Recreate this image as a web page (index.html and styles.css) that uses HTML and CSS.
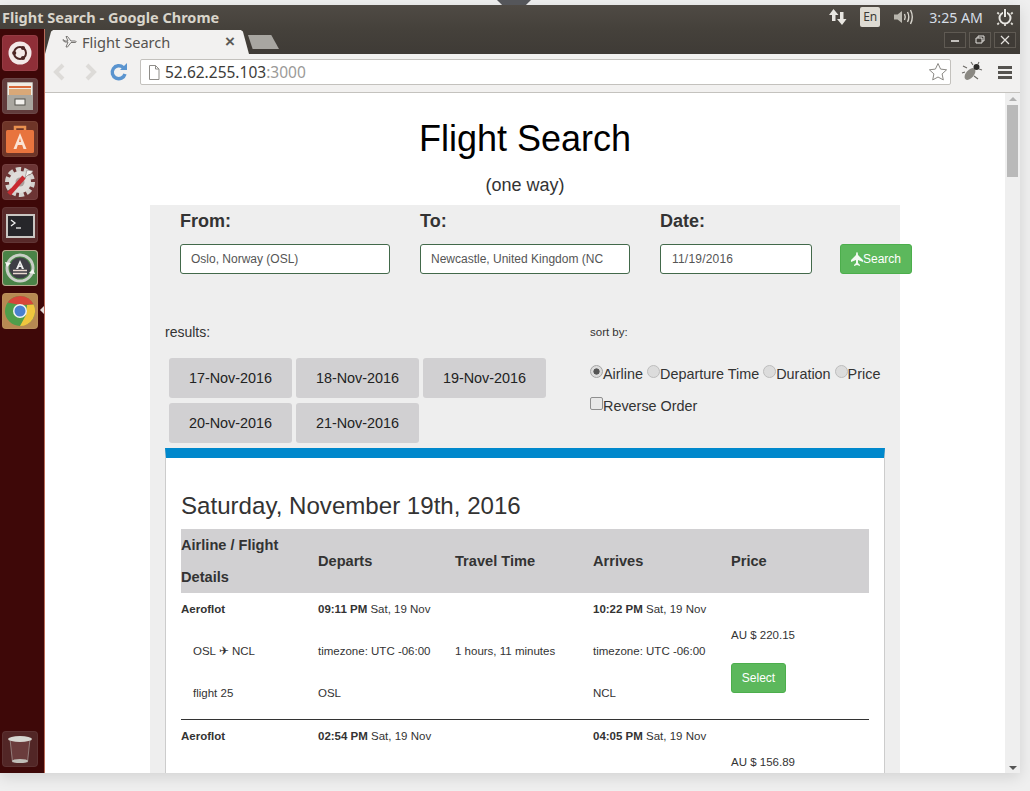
FILE: index.html
```html
<!DOCTYPE html>
<html lang="en">
<head>
  <meta charset="UTF-8">
  <title>Flight Search</title>
  <link rel="stylesheet" href="styles.css">
</head>
<body>
  <div class="notch"></div>
  <div class="window">

    <div class="top-panel">
      <span class="window-title">Flight Search - Google Chrome</span>
      <div class="indicators">
        <svg class="ind-net" width="20" height="18" viewBox="0 0 20 18"><path d="M5.500 1L1 7h3v6h3.500V7h3zM14 17l4.500-6h-3V4H12v7H9z" fill="#e8e6e1"/></svg>
        <span class="ind-lang">En</span>
        <svg class="ind-sound" width="22" height="16" viewBox="0 0 22 16"><path d="M1 5.500h3.500L9 2v12l-4.500-3.500H1z" fill="#b9b6ae"/><path d="M11.500 5q1.500 3 0 6M14.500 3q2.600 5 0 10M17.500 1q3.600 7 0 14" fill="none" stroke="#d8d5cd" stroke-width="1.400"/></svg>
        <span class="ind-clock">3:25 AM</span>
        <svg class="ind-power" width="18" height="18" viewBox="0 0 18 18"><circle cx="9" cy="10" r="5.500" fill="none" stroke="#e8e6e1" stroke-width="2"/><path d="M9 1v8" stroke="#45413b" stroke-width="4" fill="none"/><path d="M9 1v8" stroke="#e8e6e1" stroke-width="2" fill="none"/><path d="M3 6L1.300 4.500M15 6l1.700-1.500M3 15l-1.700 1.500M15 15l1.700 1.500M9 16v2" stroke="#dedcd5" stroke-width="1.800"/></svg>
      </div>
    </div>

    <div class="desktop">
      <nav class="launcher">
        <div class="tile tile-ubuntu">
          <svg width="36" height="36" viewBox="0 0 36 36">
            <circle cx="18" cy="18" r="11.500" fill="#f3e8e8"/>
            <circle cx="18" cy="18" r="6" fill="none" stroke="#4d2525" stroke-width="2"/>
            <circle cx="12.200" cy="18" r="2.100" fill="#4d2525"/>
            <circle cx="21" cy="13" r="2.100" fill="#4d2525"/>
            <circle cx="21" cy="23" r="2.100" fill="#4d2525"/>
          </svg>
        </div>
        <div class="tile tile-files">
          <svg width="36" height="36" viewBox="0 0 36 36">
            <rect x="5" y="4" width="26" height="28" rx="1" fill="#b9b5ae"/>
            <rect x="6" y="5" width="24" height="12" fill="#f1ece4"/>
            <rect x="7" y="8" width="22" height="2" fill="#d9693a"/>
            <rect x="7" y="11" width="22" height="6" fill="#d9a878"/>
            <rect x="5" y="17" width="26" height="15" fill="#a9a69f"/>
            <rect x="13" y="21" width="10" height="6" fill="#f2f0ec" stroke="#55524c"/>
          </svg>
        </div>
        <div class="tile tile-software">
          <svg width="36" height="36" viewBox="0 0 36 36">
            <path d="M13 9V6h10v3" fill="none" stroke="#e9904f" stroke-width="2.500"/>
            <rect x="4" y="9" width="28" height="23" rx="1.500" fill="#e8743e"/>
            <path d="M18 12l-6.500 16h3l1.300-4h4.400l1.300 4h3zM17 21l1-4 1 4z" fill="#fbe4d5"/>
          </svg>
        </div>
        <div class="tile tile-settings">
          <svg width="36" height="36" viewBox="0 0 36 36">
            <circle cx="18" cy="18" r="12.500" fill="none" stroke="#d4d2cf" stroke-width="5" stroke-dasharray="5 2.800"/>
            <circle cx="18" cy="18" r="11" fill="#dfddda"/>
            <circle cx="18" cy="18" r="4.500" fill="#a99f9c"/>
            <path d="M7 30L22 13" stroke="#c82a30" stroke-width="4.500"/>
            <path d="M23 14l2-8 6 1-2 3-3 1z" fill="#f4f2ef" stroke="#8a7d7a" stroke-width=".6"/>
          </svg>
        </div>
        <div class="tile tile-terminal">
          <svg width="36" height="36" viewBox="0 0 36 36">
            <rect x="4" y="7" width="29" height="24" fill="#c9c6c2"/>
            <rect x="6" y="9" width="25" height="20" fill="#26262a"/>
            <path d="M9 13l4 3-4 3" fill="none" stroke="#eee" stroke-width="1.300"/>
            <path d="M14 21h5" stroke="#eee" stroke-width="1.300"/>
          </svg>
        </div>
        <div class="tile tile-update">
          <svg width="36" height="36" viewBox="0 0 36 36">
            <circle cx="18" cy="18" r="13" fill="none" stroke="#c9cec6" stroke-width="3"/>
            <circle cx="18" cy="18" r="10.500" fill="#3e3e45"/>
            <path d="M18 10l-4 9h2.200l.7-2h2.200l.7 2H22zM17.500 15.500l.5-2 .5 2z" fill="#f0f0f0"/>
            <path d="M11 20.500h14M11 23.500h14" stroke="#e9d8cf" stroke-width="1.300"/>
            <path d="M3 12l6 1-4 4zM33 24l-6-1 4-4z" fill="#f4f6f2"/>
          </svg>
        </div>
        <div class="tile tile-chrome">
          <svg width="36" height="36" viewBox="0 0 36 36">
            <circle cx="18" cy="18" r="15" fill="#4f9e4b"/>
            <path d="M18 3a15 15 0 0 1 13.600 8.600L18 12 5.800 9.500A15 15 0 0 1 18 3z" fill="#d8453a"/>
            <path d="M31.600 11.500A15 15 0 0 1 18 33l6-11 1-10z" fill="#f0c63e"/>
            <circle cx="18" cy="18" r="7" fill="#f2f2f2"/>
            <circle cx="18" cy="18" r="5.500" fill="#4a80d0"/>
          </svg>
        </div>
        <span class="launcher-pip"></span>
        <div class="tile tile-trash">
          <svg width="36" height="36" viewBox="0 0 36 36">
            <path d="M8 8h20l-2.500 23h-15z" fill="#6a3c3c" stroke="#a99c9a" stroke-width=".7"/>
            <ellipse cx="18" cy="8" rx="12" ry="3" fill="#d6d6d1"/>
            <ellipse cx="18" cy="30" rx="8" ry="2" fill="#c0beb8"/>
          </svg>
        </div>
      </nav>

      <div class="browser">
        <div class="tab-strip">
          <div class="tab">
            <svg class="tab-icon" width="16" height="16" viewBox="0 0 16 16"><path d="M1 6.500l2 1.500h3l-2 5h1.500L9 8.500h4.500q1.500-.5 0-1.500H9L5.500 2.500H4L6 7H3L1 5.500z" fill="#f2f1f0" stroke="#6c6a66" stroke-width=".9"/></svg>
            <span class="tab-title">Flight Search</span>
            <span class="tab-close">×</span>
          </div>
          <div class="new-tab"></div>
          <div class="win-buttons">
            <span class="win-btn"><svg width="12" height="10" viewBox="0 0 12 10"><path d="M2 6h8" stroke="#e5e3df" stroke-width="1.600"/></svg></span>
            <span class="win-btn"><svg width="12" height="10" viewBox="0 0 12 10"><path d="M4 3V1h6v5H8M2 3h6v5H2z" fill="none" stroke="#e5e3df"/></svg></span>
            <span class="win-btn"><svg width="12" height="10" viewBox="0 0 12 10"><path d="M2 1l8 8M10 1L2 9" stroke="#e5e3df" stroke-width="1.200"/></svg></span>
          </div>
        </div>

        <div class="toolbar">
          <svg class="tool-arrow" width="16" height="20" viewBox="0 0 16 20"><path d="M11 3l-7 7 7 7" fill="none" stroke="#dddbd8" stroke-width="4"/></svg>
          <svg class="tool-arrow" width="16" height="20" viewBox="0 0 16 20"><path d="M5 3l7 7-7 7" fill="none" stroke="#dddbd8" stroke-width="4"/></svg>
          <svg class="tool-reload" width="20" height="20" viewBox="0 0 20 20"><path d="M16 12a6.500 6.500 0 1 1-1.800-6.500" fill="none" stroke="#5a94cf" stroke-width="3.400"/><path d="M11 8h7V1z" fill="#5a94cf"/></svg>
          <div class="omnibox">
            <svg class="omni-page" width="12" height="15" viewBox="0 0 12 15"><path d="M1.500.500h6l3.500 3.500v10.500h-9.500zM7.500.500V4H11" fill="#fff" stroke="#8f8d89"/></svg>
            <span class="omni-url">52.62.255.103<span class="omni-port">:3000</span></span>
            <svg class="omni-star" width="20" height="20" viewBox="0 0 20 20"><path d="M10 1.500l2.600 5.600 6 .7-4.500 4.100 1.200 6L10 15l-5.300 2.900 1.200-6L1.400 7.800l6-.7z" fill="#fff" stroke="#8b8985"/></svg>
          </div>
          <svg class="tool-bug" width="22" height="22" viewBox="0 0 22 22"><ellipse cx="9" cy="13" rx="4" ry="7" transform="rotate(40 9 13)" fill="#8a8882"/><circle cx="15.500" cy="6" r="3" fill="#2c2b29"/><path d="M12 4l-2-3M17 3l1-2M18 8l3 1M13 15l4 3M6 7L2 5M4 11l-3 1" stroke="#6a6864" stroke-width="1.100"/></svg>
          <div class="tool-menu"><span></span><span></span><span></span></div>
        </div>

        <div class="viewport">
          <main class="page">
            <h1>Flight Search</h1>
            <p class="subtitle">(one way)</p>

            <section class="search-panel">
              <form class="search-form">
                <div class="field field-from">
                  <label>From:</label>
                  <input type="text" value="Oslo, Norway (OSL)">
                </div>
                <div class="field field-to">
                  <label>To:</label>
                  <input type="text" value="Newcastle, United Kingdom (NC">
                </div>
                <div class="field field-date">
                  <label>Date:</label>
                  <input type="text" value="11/19/2016">
                </div>
                <button type="button" class="btn-green btn-search">
                  <svg width="12" height="14" viewBox="0 0 12 14"><path d="M6 0q1 0 1 3l5 5v2L7 8v3l2 2v1l-3-1-3 1v-1l2-2V8L0 10V8l5-5q0-3 1-3z" fill="#f3f9f3"/></svg>Search
                </button>
              </form>

              <div class="results-head">
                <div class="results-left">
                  <p class="results-label">results:</p>
                  <div class="date-tabs">
                    <a class="date-tab">17-Nov-2016</a>
                    <a class="date-tab">18-Nov-2016</a>
                    <a class="date-tab">19-Nov-2016</a>
                    <a class="date-tab">20-Nov-2016</a>
                    <a class="date-tab">21-Nov-2016</a>
                  </div>
                </div>
                <div class="results-right">
                  <p class="sort-label">sort by:</p>
                  <div class="sort-row sort-radios">
                    <label><input type="radio" name="sort" checked>Airline</label>
                    <label><input type="radio" name="sort">Departure Time</label>
                    <label><input type="radio" name="sort">Duration</label>
                    <label><input type="radio" name="sort">Price</label>
                  </div>
                  <div class="sort-row">
                    <label><input type="checkbox">Reverse Order</label>
                  </div>
                </div>
              </div>

              <div class="results-card">
                <h2>Saturday, November 19th, 2016</h2>
                <table class="flights">
                  <colgroup>
                    <col class="col-a"><col class="col-b"><col class="col-c"><col class="col-d"><col class="col-e">
                  </colgroup>
                  <thead>
                    <tr>
                      <th>Airline / Flight Details</th>
                      <th>Departs</th>
                      <th>Travel Time</th>
                      <th>Arrives</th>
                      <th>Price</th>
                    </tr>
                  </thead>
                  <tbody>
                    <tr>
                      <td>
                        <p><b>Aeroflot</b></p>
                        <p class="indent">OSL ✈ NCL</p>
                        <p class="indent">flight 25</p>
                      </td>
                      <td>
                        <p><b>09:11 PM</b> Sat, 19 Nov</p>
                        <p>timezone: UTC -06:00</p>
                        <p>OSL</p>
                      </td>
                      <td class="mid-cell"><p>1 hours, 11 minutes</p></td>
                      <td>
                        <p><b>10:22 PM</b> Sat, 19 Nov</p>
                        <p>timezone: UTC -06:00</p>
                        <p>NCL</p>
                      </td>
                      <td class="price-cell">
                        <p>AU $ 220.15</p>
                        <button type="button" class="btn-green btn-select">Select</button>
                      </td>
                    </tr>
                    <tr class="row-cut">
                      <td><p><b>Aeroflot</b></p></td>
                      <td><p><b>02:54 PM</b> Sat, 19 Nov</p></td>
                      <td></td>
                      <td><p><b>04:05 PM</b> Sat, 19 Nov</p></td>
                      <td class="price-cell"><p>AU $ 156.89</p></td>
                    </tr>
                  </tbody>
                </table>
              </div>
            </section>
          </main>
          <div class="scrollbar">
            <span class="scroll-up"></span>
            <span class="scroll-thumb"></span>
            <span class="scroll-down"></span>
          </div>
        </div>
      </div>
    </div>
  </div>
</body>
</html>
```

FILE: styles.css
```css
html, body {
  height: 100%;
}

body {
  margin: 0;
  overflow: hidden;
  background: #efefef;
  font-family: "Liberation Sans", Arial, sans-serif;
  color: #333;
}

.notch {
  position: absolute;
  top: 0;
  left: 497px;
  width: 34px;
  height: 5px;
  background: #55565a;
  clip-path: polygon(0 0, 100% 0, 85% 100%, 15% 100%);
}

.window {
  width: 1020px;
  height: 768px;
  margin-top: 5px;
  display: flex;
  flex-direction: column;
  box-shadow: 0 4px 14px rgba(0, 0, 0, 0.12);
}

/* top panel */
.top-panel {
  height: 24px;
  flex: none;
  display: flex;
  align-items: center;
  justify-content: space-between;
  background: linear-gradient(#4f4a44, #45413b);
  color: #dfdbd2;
}

.window-title {
  margin-left: 2px;
  font-family: "Noto Sans", sans-serif;
  font-size: 14.500px;
  font-weight: 700;
  color: #d9d5cb;
}

.indicators {
  display: flex;
  align-items: center;
}

.ind-net {
  margin-right: 12px;
}

.ind-lang {
  width: 20px;
  height: 20px;
  margin-right: 13px;
  background: #dedbd3;
  border-radius: 2px;
  color: #3c3b37;
  font-family: "Noto Sans", sans-serif;
  font-size: 12px;
  line-height: 20px;
  text-align: center;
}

.ind-sound {
  margin-right: 14px;
}

.ind-clock {
  margin-right: 13px;
  font-family: "Noto Sans", sans-serif;
  font-size: 14.200px;
  color: #d6dee6;
}

.ind-power {
  margin-right: 6px;
}

.desktop {
  flex: 1;
  min-height: 0;
  display: flex;
}

/* launcher */
.launcher {
  position: relative;
  width: 45px;
  flex: none;
  box-sizing: border-box;
  padding: 6px 0 6px 2px;
  display: flex;
  flex-direction: column;
  gap: 7px;
  background: #3e0808;
  border-right: 1px solid #b96a58;
}

.tile {
  width: 36px;
  height: 36px;
  flex: none;
  border-radius: 4px;
  background: #6c3434;
  box-shadow: inset 0 0 0 1px rgba(255, 255, 255, 0.06);
}

.tile svg {
  display: block;
}

.tile-ubuntu {
  background: #8f2f38;
}

.tile-files {
  background: #623c3c;
}

.tile-software {
  background: #6e3528;
}

.tile-terminal {
  background: #582a2a;
}

.tile-update {
  background: #4a8347;
  box-shadow: inset 0 0 0 1px #b9a78e;
}

.tile-chrome {
  background: #b78952;
}

.tile-trash {
  margin-top: auto;
  background: #522626;
}

.launcher-pip {
  position: absolute;
  top: 277px;
  left: 40px;
  border-top: 4px solid transparent;
  border-bottom: 4px solid transparent;
  border-right: 4px solid #e4dcd8;
}

/* browser chrome */
.browser {
  flex: 1;
  min-width: 0;
  display: flex;
  flex-direction: column;
}

.tab-strip {
  height: 25px;
  flex: none;
  display: flex;
  align-items: flex-end;
  background: linear-gradient(#45413b, #3f3b36);
  position: relative;
}

.tab {
  width: 204px;
  height: 24px;
  box-sizing: border-box;
  padding: 0 14px 0 17px;
  display: flex;
  align-items: center;
  background: #f2f1f0;
  clip-path: polygon(0 100%, 3% 6%, 4% 0, 96% 0, 97% 6%, 100% 100%);
}

.tab-icon {
  margin-right: 4px;
}

.tab-title {
  flex: 1;
  font-family: "Noto Sans", sans-serif;
  font-size: 14.600px;
  color: #55534f;
}

.tab-close {
  font-size: 17px;
  font-weight: 700;
  color: #5c5a56;
}

.new-tab {
  width: 31px;
  height: 14px;
  margin: 0 0 5px -1px;
  background: #a8a6a1;
  clip-path: polygon(0 0, 75% 0, 100% 100%, 15% 100%);
}

.win-buttons {
  margin-left: auto;
  margin-right: 4px;
  align-self: flex-start;
  margin-top: 3px;
  display: flex;
  gap: 3px;
}

.win-btn {
  width: 22px;
  height: 16px;
  display: flex;
  align-items: center;
  justify-content: center;
  border: 1px solid #5f5a53;
  box-sizing: border-box;
  background: #3f3b36;
}

.toolbar {
  height: 39px;
  flex: none;
  box-sizing: border-box;
  padding-bottom: 2px;
  display: flex;
  align-items: center;
  background: #f2f1f0;
  border-bottom: 1px solid #c4c2be;
}

.tool-arrow {
  margin-left: 8px;
  margin-right: 6px;
}

.tool-arrow:first-child {
  margin-left: 7px;
}

.tool-reload {
  margin-left: 5px;
  margin-right: 11px;
}

.omnibox {
  width: 811px;
  height: 26px;
  box-sizing: border-box;
  display: flex;
  align-items: center;
  padding: 0 2px 0 7px;
  background: #fff;
  border: 1px solid #c3c1bd;
  border-radius: 2px;
}

.omni-page {
  margin-right: 5px;
}

.omni-url {
  flex: 1;
  font-family: "Noto Sans", sans-serif;
  font-size: 15.500px;
  color: #3d3c3a;
}

.omni-port {
  color: #9b9a98;
}

.tool-bug {
  margin-left: 10px;
}

.tool-menu {
  margin-left: 15px;
  display: flex;
  flex-direction: column;
  gap: 2px;
}

.tool-menu span {
  width: 14px;
  height: 3px;
  background: #55534f;
}

/* page */
.viewport {
  flex: 1;
  min-height: 0;
  display: flex;
  overflow: hidden;
  background: #fff;
}

.page {
  flex: 1;
  min-width: 0;
}

h1 {
  margin: 21px 0 0;
  font-size: 36px;
  font-weight: 400;
  line-height: 50px;
  text-align: center;
  color: #000;
}

.subtitle {
  margin: 9px 0 0;
  font-size: 18px;
  line-height: 24px;
  text-align: center;
}

.search-panel {
  width: 750px;
  margin: 8px auto 0;
  padding: 0 15px;
  box-sizing: border-box;
  background: #eee;
}

.search-form {
  height: 119px;
  display: flex;
  align-items: flex-start;
  margin-left: 15px;
}

.field {
  flex: none;
}

.field label {
  display: block;
  height: 39px;
  font-size: 18px;
  font-weight: 700;
  line-height: 32px;
}

.field input {
  display: block;
  height: 30px;
  box-sizing: border-box;
  padding: 0 10px;
  background: #fff;
  border: 1px solid #42694a;
  border-radius: 3px;
  font-family: "Liberation Sans", Arial, sans-serif;
  font-size: 12px;
  color: #555;
}

.field-from,
.field-to {
  width: 240px;
}

.field-from input,
.field-to input {
  width: 210px;
}

.field-date {
  width: 180px;
}

.field-date input {
  width: 152px;
  padding: 0 11px;
  letter-spacing: 0.2px;
}

.btn-green {
  background: #5cb85c;
  border: 1px solid #4cae4c;
  border-radius: 3px;
  color: #fff;
  font-family: "Liberation Sans", Arial, sans-serif;
  font-size: 12px;
}

.btn-search {
  flex: none;
  width: 72px;
  height: 30px;
  margin-top: 39px;
  padding: 0;
  display: flex;
  align-items: center;
  justify-content: center;
}

.results-head {
  display: flex;
  height: 124px;
}

.results-left {
  width: 425px;
  flex: none;
}

.results-label {
  margin: 0;
  font-size: 14px;
  line-height: 16px;
}

.date-tabs {
  margin: 18px 0 0 4px;
  display: flex;
  flex-wrap: wrap;
  gap: 5px 4px;
  width: 390px;
}

.date-tab {
  width: 123px;
  height: 40px;
  border-radius: 3px;
  background: #d1d0d2;
  font-size: 14.400px;
  line-height: 40px;
  text-align: center;
  color: #222;
}

.sort-label {
  margin: 0;
  font-size: 11.500px;
  line-height: 16px;
}

.sort-row {
  display: flex;
  line-height: 32px;
  font-size: 14.400px;
}

.sort-radios {
  margin-top: 18px;
  gap: 4px;
}

.sort-row input {
  appearance: none;
  width: 13px;
  height: 13px;
  margin: 0;
  box-sizing: border-box;
  vertical-align: 1px;
  background: #dcdcdc;
  border: 1px solid #bdbdbd;
  border-radius: 50%;
}

.sort-row input[type="checkbox"] {
  background: #e8e8e8;
  border-color: #8f8f8f;
  border-radius: 2px;
}

.sort-row input:checked {
  background: radial-gradient(circle, #555 0 2.800px, #dcdcdc 3.400px);
  border-color: #a5a5a5;
}

.results-card {
  height: 400px;
  box-sizing: border-box;
  padding: 0 15px;
  background: #fff;
  border: 1px solid #ccc;
  border-top: 10px solid #0088cc;
}

h2 {
  margin: 33px 0 0;
  font-size: 24.100px;
  font-weight: 400;
  line-height: 29px;
  color: #333;
}

/* flights table */
.flights {
  width: 688px;
  margin-top: 9px;
  table-layout: fixed;
  border-collapse: collapse;
}

.col-a,
.col-b {
  width: 137px;
}

.col-c,
.col-d {
  width: 138px;
}

.flights th {
  padding: 0 20px 0 0;
  background: #d1d0d2;
  font-size: 14.600px;
  line-height: 32px;
  text-align: left;
}

.flights td {
  padding: 8px 0 18px;
  border-bottom: 1px solid #333;
  font-size: 11.500px;
  vertical-align: top;
}

.flights p {
  margin: 0 0 26px;
  line-height: 16px;
}

.flights p:last-child {
  margin-bottom: 0;
}

.flights .indent {
  padding-left: 12px;
}

.flights .mid-cell {
  vertical-align: middle;
  padding-top: 8px;
}

.flights .price-cell {
  padding-top: 34px;
}

.flights .price-cell p {
  margin-bottom: 20px;
}

.flights .row-cut td {
  border-bottom: none;
}

.btn-select {
  width: 55px;
  height: 30px;
  padding: 0;
}

/* scrollbar */
.scrollbar {
  position: relative;
  width: 15px;
  flex: none;
  background: #efefef;
}

.scroll-thumb {
  position: absolute;
  top: 12px;
  left: 2px;
  width: 11px;
  height: 72px;
  background: #b9b9b9;
}

.scroll-up,
.scroll-down {
  position: absolute;
  left: 4px;
  border-left: 4px solid transparent;
  border-right: 4px solid transparent;
}

.scroll-up {
  top: 4px;
  border-bottom: 4px solid #b0b0b0;
}

.scroll-down {
  bottom: 3px;
  border-top: 4px solid #555;
}
```
